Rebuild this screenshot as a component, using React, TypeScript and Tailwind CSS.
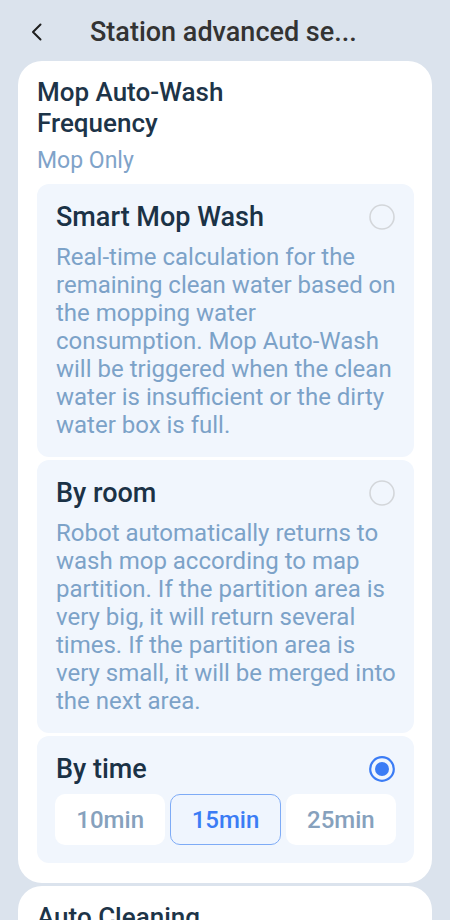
import { useState } from 'react';

const OPTIONS = [
  {
    key: 'smart',
    title: 'Smart Mop Wash',
    lines: [
      'Real-time calculation for the',
      'remaining clean water based on',
      'the mopping water',
      'consumption. Mop Auto-Wash',
      'will be triggered when the clean',
      'water is insufficient or the dirty',
      'water box is full.',
    ],
  },
  {
    key: 'room',
    title: 'By room',
    lines: [
      'Robot automatically returns to',
      'wash mop according to map',
      'partition. If the partition area is',
      'very big, it will return several',
      'times. If the partition area is',
      'very small, it will be merged into',
      'the next area.',
    ],
  },
];

const TIMES = ['10min', '15min', '25min'];

function Radio({ checked }: { checked: boolean }) {
  return (
    <svg className="w-[26px] h-[26px] flex-shrink-0" viewBox="0 0 26 26" fill="none">
      {checked ? (
        <>
          <circle cx="13" cy="13" r="11.8" stroke="#3b7cf5" strokeWidth="2.2" />
          <circle cx="13" cy="13" r="7" fill="#3b7cf5" />
        </>
      ) : (
        <circle cx="13" cy="13" r="12" stroke="#d3d6da" strokeWidth="1.6" />
      )}
    </svg>
  );
}

export default function App() {
  const [mode, setMode] = useState('time');
  const [time, setTime] = useState('15min');

  return (
    <div
      className="w-[450px] h-[920px] overflow-hidden bg-[#dbe3ed]"
      style={{ fontFamily: 'Roboto, "Noto Sans", sans-serif' }}
    >
      <div className="h-[61px] flex items-center pl-[31px] pt-[3px]">
        <svg className="w-[11px] h-[18px]" viewBox="0 0 11 18" fill="none">
          <path
            d="M9.5 1.5L2 9l7.5 7.5"
            stroke="#1f1f1f"
            strokeWidth="2"
            strokeLinecap="round"
            strokeLinejoin="round"
          />
        </svg>
        <span className="ml-[48px] text-[27px] font-medium text-[#333333] leading-none">
          Station advanced se...
        </span>
      </div>

      <div className="mx-[18px] bg-white rounded-[24px] pl-[19px] pr-[18px] pt-[16px] pb-[20px]">
        <h2 className="text-[26px] leading-[31px] font-medium text-[#1d3448]">
          Mop Auto-Wash
          <br />
          Frequency
        </h2>
        <p className="mt-[8px] text-[23px] leading-[28px] text-[#7fa3c9]">Mop Only</p>

        <div className="mt-[9px] flex flex-col gap-[3px]">
          {OPTIONS.map((o) => (
            <div
              key={o.key}
              onClick={() => setMode(o.key)}
              className="bg-[#f1f6fd] rounded-[12px] px-[19px] py-[18px] cursor-pointer"
            >
              <div className="flex items-center justify-between h-[30px]">
                <span className="text-[27px] font-medium text-[#1b3246]">{o.title}</span>
                <Radio checked={mode === o.key} />
              </div>
              <div className="mt-[11px] text-[24px] leading-[28px] text-[#7ca2c8] whitespace-nowrap">
                {o.lines.map((l) => (
                  <div key={l}>{l}</div>
                ))}
              </div>
            </div>
          ))}

          <div
            onClick={() => setMode('time')}
            className="bg-[#f1f6fd] rounded-[12px] px-[18px] py-[18px] cursor-pointer"
          >
            <div className="flex items-center justify-between h-[30px] px-[1px]">
              <span className="text-[27px] font-medium text-[#1b3246]">By time</span>
              <Radio checked={mode === 'time'} />
            </div>
            <div className="mt-[10px] grid grid-cols-3 gap-[5px]">
              {TIMES.map((t) => (
                <button
                  key={t}
                  onClick={(e) => {
                    e.stopPropagation();
                    setTime(t);
                    setMode('time');
                  }}
                  className={`h-[51px] rounded-[10px] text-[24px] font-medium flex items-center justify-center ${
                    time === t
                      ? 'bg-[#eff5fe] border border-[#7eabf6] text-[#3b7cf5]'
                      : 'bg-white text-[#86a1bd]'
                  }`}
                >
                  {t}
                </button>
              ))}
            </div>
          </div>
        </div>
      </div>

      <div className="mt-[3px] mx-[18px] bg-white rounded-t-[24px] h-[60px] pl-[19px] pt-[16px]">
        <h2 className="text-[26px] leading-[31px] font-medium text-[#1d3448]">Auto Cleaning</h2>
      </div>
    </div>
  );
}
